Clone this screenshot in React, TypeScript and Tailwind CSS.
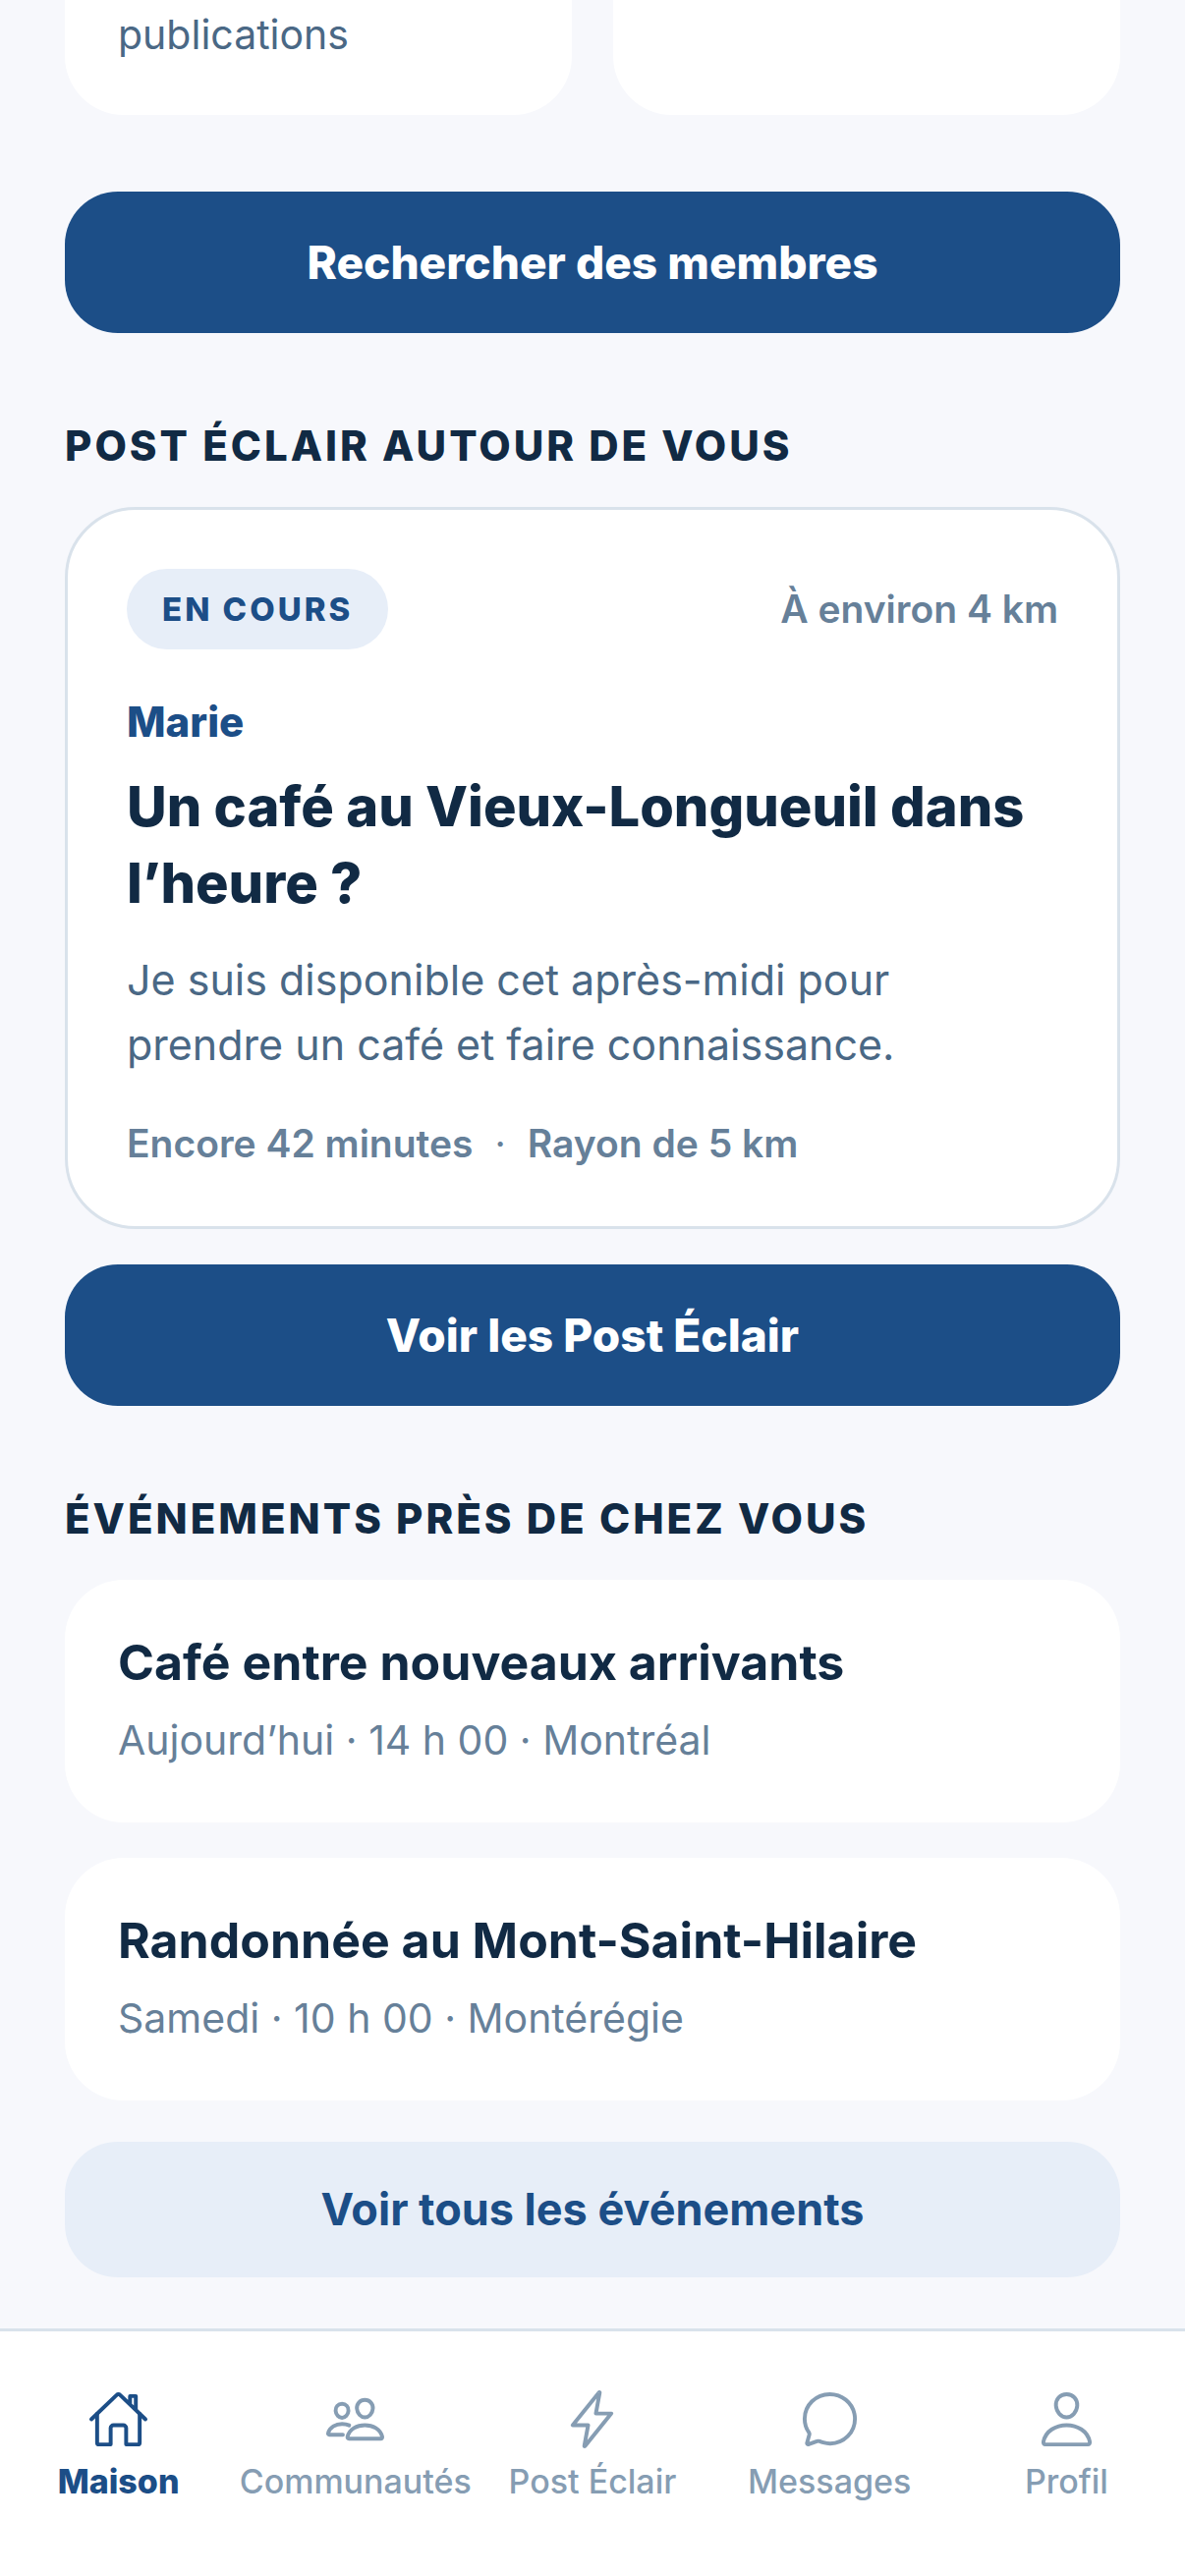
import type { IconType } from 'react-icons';
import {
  IoChatbubbleOutline,
  IoFlashOutline,
  IoHomeOutline,
  IoPeopleOutline,
  IoPersonOutline,
} from 'react-icons/io5';

const events = [
  { id: 1, title: 'Café entre nouveaux arrivants', details: 'Aujourd’hui · 14 h 00 · Montréal' },
  { id: 2, title: 'Randonnée au Mont-Saint-Hilaire', details: 'Samedi · 10 h 00 · Montérégie' },
];

const tabs: { label: string; icon: IconType; active?: boolean }[] = [
  { label: 'Maison', icon: IoHomeOutline, active: true },
  { label: 'Communautés', icon: IoPeopleOutline },
  { label: 'Post Éclair', icon: IoFlashOutline },
  { label: 'Messages', icon: IoChatbubbleOutline },
  { label: 'Profil', icon: IoPersonOutline },
];

function SectionTitle({ children }: { children: string }) {
  return (
    <h2 className="mt-[89px] mb-9 text-[42px] leading-[52px] font-extrabold tracking-[3px] text-[#112a44] uppercase">
      {children}
    </h2>
  );
}

function PrimaryButton({ children }: { children: string }) {
  return (
    <button type="button" className="h-36 w-full rounded-[54px] bg-[#1c4e87] text-[46px] leading-[54px] font-extrabold text-white">
      {children}
    </button>
  );
}

export default function App() {
  return (
    <div className="flex min-h-screen flex-col bg-[#f7f8fc] font-['Inter',sans-serif]">
      <main className="flex-1 px-[66px]">
        {/* Bas des cartes de raccourcis */}
        <div className="grid grid-cols-2 gap-[42px]">
          <div className="rounded-b-[60px] bg-white px-[54px] pt-2 pb-[54px]">
            <p className="text-[41px] leading-[55px] text-[#4a6885]">publications</p>
          </div>
          <div className="rounded-b-[60px] bg-white" />
        </div>

        <div className="mt-[78px]">
          <PrimaryButton>Rechercher des membres</PrimaryButton>
        </div>

        {/* Post Éclair */}
        <SectionTitle>Post Éclair autour de vous</SectionTitle>
        <article className="rounded-[72px] border-3 border-[#d9e2eb] bg-white p-[60px]">
          <div className="flex items-center justify-between">
            <span className="rounded-full bg-[#e7eef8] px-9 py-[21px] text-[33px] leading-10 font-extrabold tracking-[3px] text-[#1c4e87]">
              EN COURS
            </span>
            <span className="text-[39px] leading-12 font-semibold text-[#668099]">À environ 4 km</span>
          </div>
          <p className="mt-12 text-[42px] leading-[51px] font-extrabold text-[#1c4e87]">Marie</p>
          <h3 className="mt-[22px] text-[56px] leading-[78px] font-extrabold text-[#112a44]">
            Un café au Vieux-Longueuil dans l’heure ?
          </h3>
          <p className="mt-[26px] pr-9 text-[43px] leading-[66px] text-[#4a6885]">
            Je suis disponible cet après-midi pour prendre un café et faire connaissance.
          </p>
          <div className="mt-11 flex gap-[22px] text-[39px] leading-12 font-semibold text-[#668099]">
            <span>Encore 42 minutes</span>
            <span className="font-normal">·</span>
            <span>Rayon de 5 km</span>
          </div>
        </article>
        <div className="mt-9">
          <PrimaryButton>Voir les Post Éclair</PrimaryButton>
        </div>

        {/* Événements */}
        <SectionTitle>Événements près de chez vous</SectionTitle>
        <div className="flex flex-col gap-9">
          {events.map((event) => (
            <article key={event.id} className="rounded-[60px] bg-white px-[54px] pt-[52px] pb-[57px]">
              <h3 className="text-[50px] leading-16 font-bold text-[#112a44]">{event.title}</h3>
              <p className="mt-5 text-[41px] leading-[54px] text-[#668099]">{event.details}</p>
            </article>
          ))}
        </div>
        <button
          type="button"
          className="mt-[42px] mb-[52px] h-[138px] w-full rounded-[54px] bg-[#e7eef8] text-[45px] leading-[54px] font-bold text-[#1c4e87]"
        >
          Voir tous les événements
        </button>
      </main>

      <nav className="grid h-[252px] grid-cols-5 border-t-3 border-[#d9e2eb] bg-white pt-[58px]">
        {tabs.map(({ label, icon: Icon, active }) => (
          <a
            key={label}
            href="#"
            aria-current={active ? 'page' : undefined}
            className={`flex flex-col items-center gap-3 text-[34px] leading-10 whitespace-nowrap ${
              active ? 'font-extrabold text-[#1c4e87]' : 'font-medium text-[#869db3]'
            }`}
          >
            <Icon className="size-[63px]" />
            {label}
          </a>
        ))}
      </nav>
    </div>
  );
}
